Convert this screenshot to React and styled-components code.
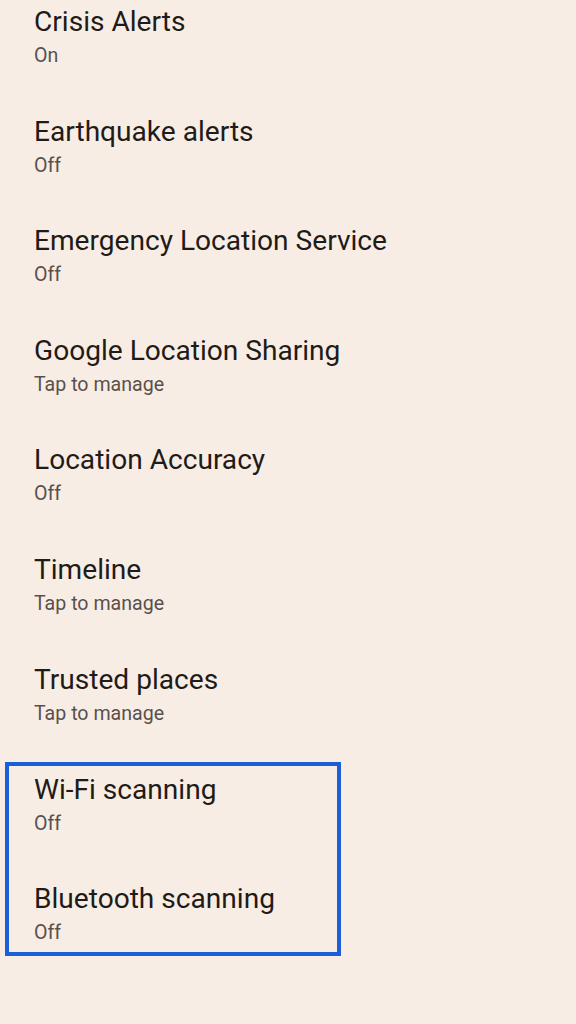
import React from "react";
import styled, { createGlobalStyle } from "styled-components";

const Global = createGlobalStyle`
  html, body { margin: 0; padding: 0; background: #f8ede5; }
  body { font-family: Roboto, "Noto Sans", sans-serif; -webkit-font-smoothing: antialiased; }
`;

const Page = styled.div`
  width: 576px;
  min-height: 1024px;
  box-sizing: border-box;
  padding: 6px 5px 0;
  background: #f8ede5;
  display: flex;
  flex-direction: column;
`;

const List = styled.div`
  display: flex;
  flex-direction: column;
  gap: 47.6px;
`;

const Row = styled.div`
  display: flex;
  flex-direction: column;
  padding-left: ${(p) => (p.$inset ? 25 : 29)}px;
`;

const Title = styled.div`
  font-size: 28.1px;
  line-height: 32px;
  color: #1f1b17;
  white-space: nowrap;
`;

const Sub = styled.div`
  margin-top: 6px;
  font-size: 19.6px;
  line-height: 24px;
  color: #58514b;
  white-space: nowrap;
`;

const Highlight = styled(List)`
  margin-top: 36px;
  width: 336px;
  box-sizing: border-box;
  border: 4px solid #1a5fd8;
  padding: 8px 0 7px;
`;

const items = [
  ["Crisis Alerts", "On"],
  ["Earthquake alerts", "Off"],
  ["Emergency Location Service", "Off"],
  ["Google Location Sharing", "Tap to manage"],
  ["Location Accuracy", "Off"],
  ["Timeline", "Tap to manage"],
  ["Trusted places", "Tap to manage"],
];

const boxed = [
  ["Wi-Fi scanning", "Off"],
  ["Bluetooth scanning", "Off"],
];

export default function App() {
  return (
    <>
      <Global />
      <Page>
        <List>
          {items.map(([t, s]) => (
            <Row key={t}>
              <Title>{t}</Title>
              <Sub>{s}</Sub>
            </Row>
          ))}
        </List>
        <Highlight>
          {boxed.map(([t, s]) => (
            <Row key={t} $inset>
              <Title>{t}</Title>
              <Sub>{s}</Sub>
            </Row>
          ))}
        </Highlight>
      </Page>
    </>
  );
}
